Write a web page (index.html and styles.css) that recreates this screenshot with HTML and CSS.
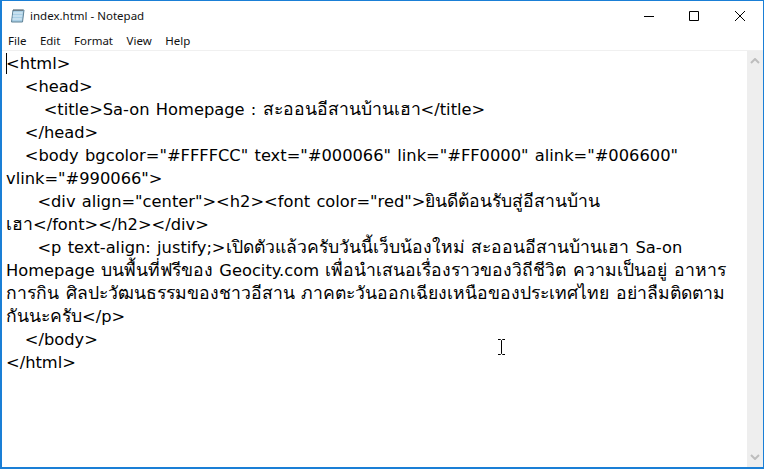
FILE: index.html
```html
<!DOCTYPE html>
<html lang="th">

<head>
  <meta charset="UTF-8" />
  <title>index.html - Notepad</title>
  <link rel="stylesheet" href="styles.css">
</head>

<body>
  <div class="window">
    <div class="titlebar">
      <svg class="app-icon" width="16" height="16" viewBox="0 0 16 16">
        <path d="M3 2h11l-1.500 12H1.500z" fill="#a9cfe6" stroke="#5f8296" stroke-width="1" />
        <path d="M3 5l9.500 0M2.700 8h9.500M2.300 11h9.500" stroke="#e4f0f7" stroke-width="1" />
        <path d="M4 1.500v1.500M6 1.500v1.500M8 1.500v1.500M10 1.500v1.500M12 1.500v1.500" stroke="#555" stroke-width="1" />
      </svg>
      <span class="title">index.html - Notepad</span>
      <div class="controls">
        <svg width="10" height="10" viewBox="0 0 10 10"><path d="M0 5.500h10" stroke="#000" fill="none" /></svg>
        <svg width="10" height="10" viewBox="0 0 10 10"><path d="M.5 .5h9v9h-9z" stroke="#000" fill="none" /></svg>
        <svg width="10" height="10" viewBox="0 0 10 10"><path d="M0 0l10 10M10 0L0 10" stroke="#000" fill="none" /></svg>
      </div>
    </div>

    <div class="menubar">
      <span>File</span>
      <span>Edit</span>
      <span>Format</span>
      <span>View</span>
      <span>Help</span>
    </div>

    <div class="main">
      <div class="editor">
        <span class="caret"></span>
        <pre>&lt;html&gt;
   &lt;head&gt;
      &lt;title&gt;Sa-on Homepage : <span class="th">สะออนอีสานบ้านเฮา</span>&lt;/title&gt;
   &lt;/head&gt;
   &lt;body bgcolor="#FFFFCC" text="#000066" link="#FF0000" alink="#006600"
vlink="#990066"&gt;
     &lt;div align="center"&gt;&lt;h2&gt;&lt;font color="red"&gt;<span class="th">ยินดีต้อนรับสู่อีสานบ้าน</span>
<span class="th">เฮา</span>&lt;/font&gt;&lt;/h2&gt;&lt;/div&gt;
     &lt;p text-align: justify;&gt;<span class="th">เปิดตัวแล้วครับวันนี้เว็บน้องใหม่ สะออนอีสานบ้านเฮา</span> Sa-on
Homepage <span class="th">บนพื้นที่ฟรีของ</span> Geocity.com <span class="th">เพื่อนำเสนอเรื่องราวของวิถีชีวิต ความเป็นอยู่ อาหาร</span>
<span class="th">การกิน ศิลปะวัฒนธรรมของชาวอีสาน ภาคตะวันออกเฉียงเหนือของประเทศไทย อย่าลืมติดตาม</span>
<span class="th">กันนะครับ</span>&lt;/p&gt;
   &lt;/body&gt;
&lt;/html&gt;</pre>
        <svg class="ibeam" width="9" height="16" viewBox="0 0 9 16">
          <path d="M1 .5h2.500l1 1 1-1H8M4.500 1.500v13M1 15.500h2.500l1-1 1 1H8" stroke="#000" fill="none" />
        </svg>
      </div>
      <div class="scrollbar">
        <svg width="10" height="6" viewBox="0 0 10 6"><path d="M1 5l4-4 4 4" stroke="#bdbdbd" stroke-width="2" fill="none" /></svg>
        <svg width="10" height="6" viewBox="0 0 10 6"><path d="M1 1l4 4 4-4" stroke="#bdbdbd" stroke-width="2" fill="none" /></svg>
      </div>
    </div>
  </div>
</body>

</html>
```

FILE: styles.css
```css
* {
  box-sizing: border-box;
}

body {
  margin: 0;
  background: #fff;
}

.window {
  width: 764px;
  height: 469px;
  display: flex;
  flex-direction: column;
  border: 1px solid #1a7fd6;
  border-width: 1px 1px 2px 2px;
  background: #fff;
  font-family: "Noto Sans", "DejaVu Sans", sans-serif;
  overflow: hidden;
}

.titlebar {
  height: 29px;
  display: flex;
  align-items: center;
  padding-left: 8px;
  flex: none;
}

.app-icon {
  margin-right: 4px;
}

.title {
  font-size: 11.500px;
  color: #111;
}

.controls {
  margin-left: auto;
  display: flex;
  gap: 36px;
  padding-right: 18px;
  align-items: center;
}

.controls svg:first-child {
  margin-right: -1px;
}

.menubar {
  height: 20px;
  display: flex;
  align-items: center;
  gap: 13.500px;
  padding-left: 6px;
  font-size: 11.500px;
  color: #111;
  flex: none;
}

.main {
  flex: 1;
  display: flex;
  border-top: 1px solid #f0f0f0;
  min-height: 0;
}

.editor {
  flex: 1;
  position: relative;
  padding: 1px 0 0 4px;
}

.editor pre {
  margin: 0;
  font-family: "DejaVu Sans", "Noto Sans", sans-serif;
  font-size: 16.300px;
  word-spacing: 1.100px;
  line-height: 23px;
  color: #000;
}

.th {
  font-size: 17.600px;
  line-height: 1;
}

.caret {
  position: absolute;
  left: 4px;
  top: 2px;
  width: 1px;
  height: 21px;
  background: #000;
}

.ibeam {
  position: absolute;
  left: 495px;
  top: 288px;
}

.scrollbar {
  width: 16px;
  background: #eeeeee;
  display: flex;
  flex-direction: column;
  justify-content: space-between;
  align-items: center;
  padding: 7px 0;
  flex: none;
}
```
